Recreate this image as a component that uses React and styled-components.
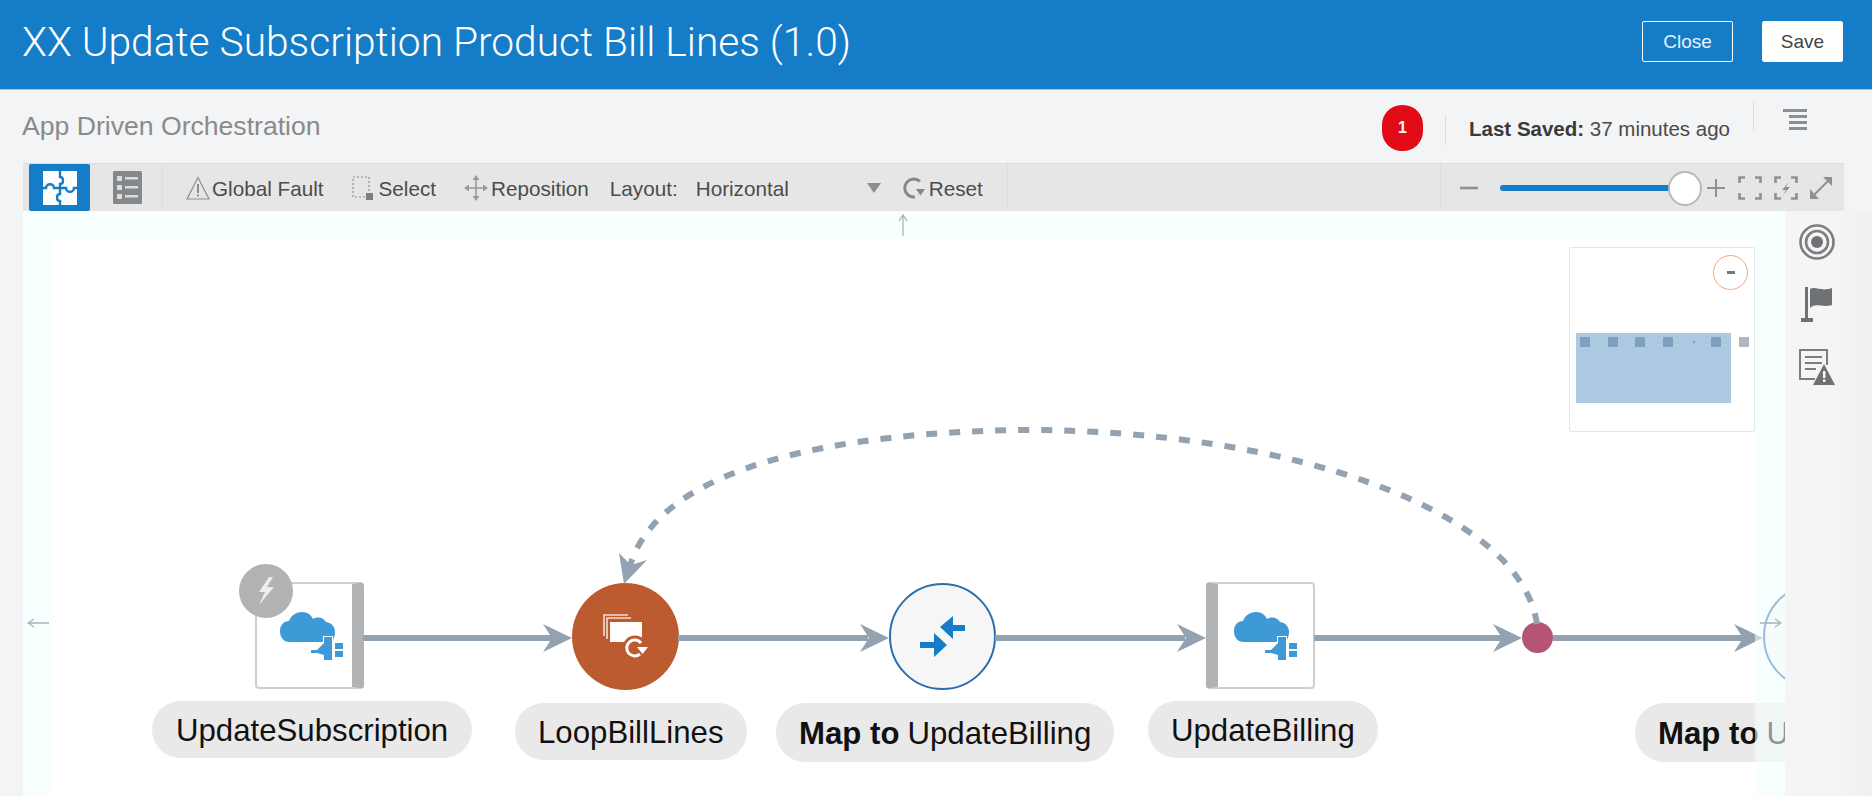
import React from 'react';
import styled, { createGlobalStyle } from 'styled-components';

const GlobalStyle = createGlobalStyle`
	html, body {
		margin: 0;
		padding: 0;
		background: #f3f4f6;
		font-family: 'Liberation Sans', Arial, sans-serif;
	}
	* { box-sizing: border-box; }
`;

const Page = styled.div`
	width: 1872px;
	height: 796px;
	overflow: hidden;
	display: flex;
	flex-direction: column;
`;

const Header = styled.header`
	height: 90px;
	flex: none;
	background: #157cc7;
	border-bottom: 1px solid #9cc8e8;
	display: flex;
	align-items: center;
	padding: 0 29px 6px 22px;
`;

const Title = styled.h1`
	margin: 0;
	flex: 1;
	font-family: Roboto, 'Liberation Sans', sans-serif;
	font-weight: 300;
	font-size: 40.7px;
	color: #fff;
	white-space: nowrap;
`;

const HeaderButton = styled.button`
	width: ${(p) => (p.$primary ? 81 : 91)}px;
	height: 41px;
	margin-left: ${(p) => (p.$primary ? 29 : 0)}px;
	border: 1px solid #fff;
	border-radius: 2px;
	background: ${(p) => (p.$primary ? '#fff' : 'transparent')};
	color: ${(p) => (p.$primary ? '#444' : '#e6f2fa')};
	font: 19px 'Liberation Sans', sans-serif;
	padding: 0;
`;

const SubHeader = styled.div`
	height: 73px;
	flex: none;
	display: flex;
	align-items: center;
	padding: 0 0 0 22px;
`;

const AppType = styled.div`
	flex: 1;
	font-size: 26.6px;
	color: #8a8a8a;
	padding-bottom: 1px;
`;

const Badge = styled.div`
	width: 41px;
	height: 46px;
	border-radius: 20px;
	background: #e20a16;
	color: #fff;
	font-size: 16px;
	font-weight: 700;
	display: flex;
	align-items: center;
	justify-content: center;
	margin-top: 2px;
`;

const VRule = styled.div`
	width: 1px;
	height: 30px;
	background: #d9dfe6;
	margin: ${(p) => p.$margin};
`;

const LastSaved = styled.div`
	font-size: 20.5px;
	color: #4a4a4a;
	margin-top: 4px;
	white-space: nowrap;
	b { color: #3a3a3a; }
`;

const MenuButton = styled.div`
	width: 24px;
	margin: -14px 65px 0 29px;
	display: flex;
	flex-direction: column;
	align-items: flex-end;
	gap: 3px;
	span {
		height: 3px;
		width: 18px;
		background: #8b8f93;
	}
	span:first-child { width: 24px; }
`;

const Workspace = styled.div`
	flex: 1;
	min-height: 0;
	display: flex;
	flex-direction: column;
	padding-left: 23px;
`;

const Toolbar = styled.div`
	height: 48px;
	flex: none;
	width: 1821px;
	background: #e6e6e6;
	border-top: 1px solid #dedcd2;
	display: flex;
	align-items: center;
	font-size: 20.7px;
	color: #4c4c4c;
`;

const ModeButton = styled.div`
	width: 61px;
	height: 47px;
	margin-left: 6px;
	flex: none;
	border-radius: 2px;
	background: #157cc7;
	display: flex;
	align-items: center;
	justify-content: center;
`;

const ToolGroup = styled.div`
	height: 47px;
	display: flex;
	align-items: center;
	border-right: ${(p) => (p.$bare ? 'none' : '1px solid #dddddd')};
	${(p) => p.$width && `width: ${p.$width}px;`}
	${(p) => p.$grow && 'flex: 1;'}
`;

const Tool = styled.div`
	display: flex;
	align-items: center;
	gap: ${(p) => p.$gap ?? 2}px;
	margin-left: ${(p) => p.$left}px;
	margin-right: ${(p) => p.$right ?? 0}px;
	white-space: nowrap;
	svg { flex: none; }
`;

const ToolLabel = styled.span`
	padding-top: 2px;
`;

const Caret = styled.span`
	width: 0;
	height: 0;
	margin-left: ${(p) => p.$left}px;
	border-left: 7px solid transparent;
	border-right: 7px solid transparent;
	border-top: 10px solid #8e8e8e;
`;

const SliderTrack = styled.div`
	width: 192px;
	height: 6px;
	margin-left: 22px;
	border-radius: 3px;
	background: #157cc7;
	position: relative;
`;

const SliderThumb = styled.div`
	position: absolute;
	right: -10px;
	top: -14px;
	width: 34px;
	height: 35px;
	border-radius: 50%;
	background: #fff;
	border: 2px solid #b9b9b9;
`;

const Body = styled.div`
	flex: 1;
	min-height: 0;
	display: flex;
`;

const Canvas = styled.div`
	flex: 1;
	position: relative;
	overflow: hidden;
	background: #f8ffff;
	padding: 27px 30px 0 29px;
	display: flex;
`;

const Sheet = styled.div`
	flex: 1;
	background: #fff;
	position: relative;
`;

const Edges = styled.svg`
	position: absolute;
	left: 0;
	top: 0;
	width: 1762px;
	height: 585px;
`;

// page coordinates, the sheet starts at 52,238
const Card = styled.div`
	position: absolute;
	left: ${(p) => p.$x - 52}px;
	top: 344px;
	width: 109px;
	height: 107px;
	background: #fff;
	border: 2px solid #cfcfcf;
	border-radius: 4px;
	${(p) => `border-${p.$bar}: 12px solid #b0b2b4;`}
	padding-left: ${(p) => p.$inset ?? 0}px;
	display: flex;
	align-items: center;
	justify-content: center;
`;

const Trigger = styled.div`
	position: absolute;
	left: 187px;
	top: 326px;
	width: 54px;
	height: 54px;
	border-radius: 50%;
	background: #b0b2b4;
	display: flex;
	align-items: center;
	justify-content: center;
`;

const Round = styled.div`
	position: absolute;
	left: ${(p) => p.$x - 52}px;
	top: 345px;
	width: 107px;
	height: 107px;
	border-radius: 50%;
	background: ${(p) => p.$fill};
	border: ${(p) => (p.$ring ? '2px solid #2a6ead' : 'none')};
	display: flex;
	align-items: center;
	justify-content: center;
`;

const Junction = styled.div`
	position: absolute;
	left: 1470px;
	top: 384px;
	width: 31px;
	height: 31px;
	border-radius: 50%;
	background: #b55474;
`;

const Pill = styled.div`
	position: absolute;
	left: ${(p) => p.$x - 52}px;
	top: ${(p) => p.$y - 238}px;
	height: ${(p) => p.$h}px;
	padding: 2px ${(p) => p.$pad ?? 23}px 0;
	border-radius: 29px;
	background: #e9e9e9;
	display: flex;
	align-items: center;
	font-size: 31.2px;
	color: #111;
	white-space: nowrap;
	b { margin-right: 8px; }
`;

const EdgeFade = styled.div`
	position: absolute;
	right: 0;
	top: 0;
	bottom: 0;
	width: 30px;
	background: rgba(246, 255, 255, 0.55);
`;

const ScrollHint = styled.svg`
	position: absolute;
	left: ${(p) => p.$x}px;
	top: ${(p) => p.$y}px;
`;

const Minimap = styled.div`
	position: absolute;
	left: 1546px;
	top: 36px;
	width: 186px;
	height: 185px;
	background: #fff;
	border: 1px solid #e3e8ee;
	border-radius: 2px;
`;

const MiniToggle = styled.div`
	position: absolute;
	left: 143px;
	top: 7px;
	width: 35px;
	height: 35px;
	border-radius: 50%;
	border: 1px solid #f3a878;
	display: flex;
	align-items: center;
	justify-content: center;
	&::after {
		content: '';
		width: 8px;
		height: 3px;
		background: #777;
	}
`;

const MiniView = styled.div`
	position: absolute;
	left: 6px;
	top: 85px;
	width: 155px;
	height: 70px;
	background: #adc8e1;
`;

const MiniNode = styled.div`
	position: absolute;
	left: ${(p) => p.$x}px;
	top: ${(p) => (p.$dot ? 93 : 89)}px;
	width: ${(p) => (p.$dot ? 2 : 10)}px;
	height: ${(p) => (p.$dot ? 2 : 10)}px;
	background: ${(p) => (p.$out ? '#adb8c4' : '#7d9fc0')};
`;

const Rail = styled.aside`
	width: 87px;
	flex: none;
	background: linear-gradient(90deg, #f5f5f6 50%, #f0f0f1);
	display: flex;
	flex-direction: column;
	align-items: center;
	padding: 13px 24px 0 0;
	gap: 27px;
`;

const PuzzleIcon = () => (
	<svg width="36" height="36" viewBox="0 0 36 36">
		<rect x="1" y="1" width="34" height="34" fill="#fff" />
		<g fill="none" stroke="#157cc7" strokeWidth="2.4">
			<path d="M18 0V7c4 0 4 7 0 7v4H12c0-5-8-5-8 0H0" />
			<path d="M18 36V31c-4 0-4-7 0-7v-6h6c0 5 8 5 8 0h4" />
		</g>
	</svg>
);

const ListIcon = () => (
	<svg width="29" height="33" viewBox="0 0 29 33">
		<rect width="29" height="33" rx="1.5" fill="#85888a" />
		<g fill="#dcdcdc">
			<rect x="4" y="5" width="5" height="5" />
			<rect x="4" y="14" width="5" height="5" />
			<rect x="4" y="23" width="5" height="5" />
			<rect x="12" y="6" width="13" height="2.5" />
			<rect x="12" y="15" width="13" height="2.5" />
			<rect x="12" y="24" width="13" height="2.5" />
		</g>
	</svg>
);

const WarnIcon = () => (
	<svg width="24" height="24" viewBox="0 0 24 24">
		<path d="M12 1.5 23 23H1Z" fill="none" stroke="#8d8d8d" strokeWidth="1.2" />
		<rect x="11" y="8" width="2" height="9" fill="#8d8d8d" />
		<rect x="11" y="18.5" width="2" height="2" fill="#8d8d8d" />
	</svg>
);

const SelectIcon = () => (
	<svg width="22" height="24" viewBox="0 0 22 24">
		<rect x="1" y="1" width="16" height="20" fill="none" stroke="#8d8d8d" strokeWidth="1.2" strokeDasharray="2 2" />
		<rect x="14" y="17" width="7" height="7" fill="#7f7f7f" />
	</svg>
);

const MoveIcon = () => (
	<svg width="24" height="26" viewBox="0 0 24 26">
		<path d="M12 3V23M2 13H22" stroke="#9a9a9a" strokeWidth="1.6" />
		<path d="M12 0 15.5 5H8.5ZM12 26 15.5 21H8.5ZM0 13 5 9.5V16.5ZM24 13 19 9.5V16.5Z" fill="#9a9a9a" />
	</svg>
);

const ResetIcon = () => (
	<svg width="23" height="24" viewBox="0 0 23 24">
		<path d="M17 5.5A9 9 0 1 0 12 21" fill="none" stroke="#85888a" strokeWidth="3" />
		<path d="M13 13H22L17.5 19.5Z" fill="#85888a" />
	</svg>
);

const MinusIcon = () => (
	<svg width="18" height="4" viewBox="0 0 18 4">
		<rect width="18" height="2.6" y="0.7" fill="#8d9196" />
	</svg>
);

const PlusIcon = () => (
	<svg width="18" height="18" viewBox="0 0 18 18">
		<path d="M9 0V18M0 9H18" stroke="#8d9196" strokeWidth="2" />
	</svg>
);

const FitIcon = ({ bolt }) => (
	<svg width="24" height="24" viewBox="0 0 24 24">
		<path d="M1.5 7V1.5H7M17 1.5H22.5V7M22.5 17V22.5H17M7 22.5H1.5V17" fill="none" stroke="#8d9196" strokeWidth="2.6" />
		{bolt && <path d="M15 6 8 14H12L9 19 16 11H12Z" fill="#8d9196" />}
	</svg>
);

const ExpandIcon = () => (
	<svg width="22" height="23" viewBox="0 0 22 23">
		<path d="M3 20 19 4" stroke="#8d9196" strokeWidth="2" />
		<path d="M13 1H22V10ZM0 13V23H9Z" fill="#8d9196" />
	</svg>
);

const TargetIcon = () => (
	<svg width="36" height="36" viewBox="0 0 36 36">
		<circle cx="18" cy="18" r="16.5" fill="none" stroke="#7b7e81" strokeWidth="2.6" />
		<circle cx="18" cy="18" r="11" fill="none" stroke="#7b7e81" strokeWidth="2.6" />
		<circle cx="18" cy="18" r="6" fill="#6f7275" />
	</svg>
);

const FlagIcon = () => (
	<svg width="32" height="35" viewBox="0 0 32 35">
		<rect x="4" y="0" width="3" height="31" fill="#6f7275" />
		<rect x="0" y="31" width="12" height="4" fill="#6f7275" />
		<path d="M9 2C15 -1 20 5 31 1V18C20 21 15 15 9 21Z" fill="#6f7275" />
	</svg>
);

const IssuesIcon = () => (
	<svg width="36" height="36" viewBox="0 0 36 36">
		<path d="M16 30H1V1H28V16" fill="none" stroke="#7b7e81" strokeWidth="2" />
		<path d="M6 8H23M6 14H23M6 20H17" stroke="#7b7e81" strokeWidth="2" />
		<path d="M25 15 36 36H14Z" fill="#6f7275" />
		<rect x="24" y="22" width="2.4" height="7" fill="#fff" />
		<rect x="24" y="30.5" width="2.4" height="2.4" fill="#fff" />
	</svg>
);

const CloudPlug = () => (
	<svg width="64" height="50" viewBox="0 0 64 50">
		<path
			d="M10 31C3 31 0 26 0 20 0 14 4 10 9 10 11 4 17 1 22 1 28 1 31 4 33 8 38 5 44 7 46 11 52 12 55 16 55 21 55 24 54 27 52 31Z"
			fill="#3d9ad6"
		/>
		<path d="M30 38H36L43 30V25H53V50H43V45L37 43H30Z" fill="#fff" />
		<path d="M31 39H37L44 32V26H52V49H44V44L37 42H31Z" fill="#3d9ad6" />
		<rect x="55" y="32" width="8" height="6" fill="#3d9ad6" />
		<rect x="55" y="40" width="8" height="6" fill="#3d9ad6" />
	</svg>
);

const BoltIcon = () => (
	<svg width="20" height="28" viewBox="0 0 20 28">
		<path d="M13 0 3 15H9L3 28 18 10H11L17 0Z" fill="#eceded" />
	</svg>
);

const LoopIcon = () => (
	<svg width="46" height="46" viewBox="0 0 46 46">
		<g fill="none" stroke="#f5dccf" strokeWidth="1.6">
			<path d="M1 22V1H25" />
			<path d="M4 25V4H28" />
		</g>
		<path d="M7 8H39V28H7Z" fill="#fff" />
		<circle cx="32" cy="34" r="12.5" fill="#bd5b30" />
		<path d="M38 29A8 8 0 1 0 37 40" fill="none" stroke="#fff" strokeWidth="3" />
		<path d="M34 33H45L39.5 40Z" fill="#fff" />
	</svg>
);

const MapIcon = () => (
	<svg width="45" height="41" viewBox="0 0 45 41">
		<path d="M20 11 33 0V9H45V15H33V23Z" fill="#157cc7" />
		<path d="M27 29 14 17V26H0V32H14V41Z" fill="#157cc7" />
	</svg>
);

const flowLines = [
	[363, 552],
	[678, 868],
	[995, 1185],
	[1314, 1502],
	[1553, 1745],
];
const flowHeads = [572, 889, 1206, 1522, 1763];

const Flow = () => (
	<Edges viewBox="23 211 1762 585">
		<g stroke="#93a2b0" strokeWidth="6">
			{flowLines.map(([a, b]) => (
				<line key={a} x1={a} y1="638" x2={b} y2="638" />
			))}
		</g>
		<g fill="#93a2b0">
			{flowHeads.map((x) => (
				<path key={x} d={`M${x - 29} 624 ${x} 638 ${x - 29} 652 ${x - 20} 638Z`} />
			))}
			<path d="M619 553 631 565 647 560 624 584Z" />
		</g>
		<path
			d="M1537 624C1520 510 1290 430 1025 430 840 432 660 465 630 566"
			fill="none"
			stroke="#93a2b0"
			strokeWidth="6"
			strokeDasharray="11 12"
		/>
	</Edges>
);

const MiniMapPanel = () => (
	<Minimap>
		<MiniToggle />
		<MiniView />
		{[10, 38, 65, 93, 123, 141].map((x) => (
			<MiniNode key={x} $x={x} $dot={x === 123} />
		))}
		<MiniNode $x={169} $out />
	</Minimap>
);

export default function App() {
	return (
		<Page>
			<GlobalStyle />
			<Header>
				<Title>XX Update Subscription Product Bill Lines (1.0)</Title>
				<HeaderButton>Close</HeaderButton>
				<HeaderButton $primary>Save</HeaderButton>
			</Header>
			<SubHeader>
				<AppType>App Driven Orchestration</AppType>
				<Badge>1</Badge>
				<VRule $margin="6px 23px 0 22px" />
				<LastSaved>
					<b>Last Saved:</b> 37 minutes ago
				</LastSaved>
				<VRule $margin="-22px 0 0 23px" />
				<MenuButton>
					<span />
					<span />
					<span />
					<span />
				</MenuButton>
			</SubHeader>
			<Workspace>
				<Toolbar>
					<ToolGroup>
						<ModeButton>
							<PuzzleIcon />
						</ModeButton>
						<Tool $left={23} $right={20}>
							<ListIcon />
						</Tool>
					</ToolGroup>
					<ToolGroup $width={845}>
						<Tool $left={23}>
							<WarnIcon />
							<ToolLabel>Global Fault</ToolLabel>
						</Tool>
						<Tool $left={28} $gap={5}>
							<SelectIcon />
							<ToolLabel>Select</ToolLabel>
						</Tool>
						<Tool $left={28} $gap={3}>
							<MoveIcon />
							<ToolLabel>Reposition</ToolLabel>
						</Tool>
						<Tool $left={21}>
							<ToolLabel>Layout:</ToolLabel>
						</Tool>
						<Tool $left={18}>
							<ToolLabel>Horizontal</ToolLabel>
						</Tool>
						<Caret $left={78} />
						<Tool $left={22} $gap={3}>
							<ResetIcon />
							<ToolLabel>Reset</ToolLabel>
						</Tool>
					</ToolGroup>
					<ToolGroup $grow />
					<ToolGroup $bare>
						<Tool $left={19}>
							<MinusIcon />
						</Tool>
						<SliderTrack>
							<SliderThumb />
						</SliderTrack>
						<Tool $left={15}>
							<PlusIcon />
						</Tool>
						<Tool $left={13}>
							<FitIcon />
						</Tool>
						<Tool $left={12}>
							<FitIcon bolt />
						</Tool>
						<Tool $left={12} $right={12}>
							<ExpandIcon />
						</Tool>
					</ToolGroup>
				</Toolbar>
				<Body>
					<Canvas>
						<Sheet>
							<Card $x={255} $bar="right" $inset={14}>
								<CloudPlug />
							</Card>
							<Trigger>
								<BoltIcon />
							</Trigger>
							<Pill $x={152} $y={701} $h={57} $pad={24}>UpdateSubscription</Pill>

							<Round $x={572} $fill="#bd5b30">
								<LoopIcon />
							</Round>
							<Pill $x={515} $y={703} $h={57}>LoopBillLines</Pill>

							<Round $x={889} $fill="#f6f6f6" $ring>
								<MapIcon />
							</Round>
							<Pill $x={776} $y={703} $h={59}>
								<b>Map to</b> UpdateBilling
							</Pill>

							<Card $x={1206} $bar="left">
								<CloudPlug />
							</Card>
							<Pill $x={1148} $y={701} $h={57}>UpdateBilling</Pill>

							<Junction />

							<Round $x={1763} $fill="#f6f6f6" $ring />
							<Pill $x={1635} $y={703} $h={59}>
								<b>Map to</b> UpdateBilling
							</Pill>
						</Sheet>
						<Flow />
						<EdgeFade />
						<ScrollHint $x={874} $y={3} width="12" height="22" viewBox="0 0 12 22">
							<path d="M6 22V2M2 7 6 1 10 7" fill="none" stroke="#a9b3b8" strokeWidth="1.3" />
						</ScrollHint>
						<ScrollHint $x={4} $y={406} width="22" height="12" viewBox="0 0 22 12">
							<path d="M22 6H2M7 2 1 6 7 10" fill="none" stroke="#a9b3b8" strokeWidth="1.3" />
						</ScrollHint>
						<ScrollHint $x={1737} $y={406} width="22" height="12" viewBox="0 0 22 12">
							<path d="M0 6H20M15 2 21 6 15 10" fill="none" stroke="#a9b3b8" strokeWidth="1.3" />
						</ScrollHint>
						<MiniMapPanel />
					</Canvas>
					<Rail>
						<TargetIcon />
						<FlagIcon />
						<IssuesIcon />
					</Rail>
				</Body>
			</Workspace>
		</Page>
	);
}
